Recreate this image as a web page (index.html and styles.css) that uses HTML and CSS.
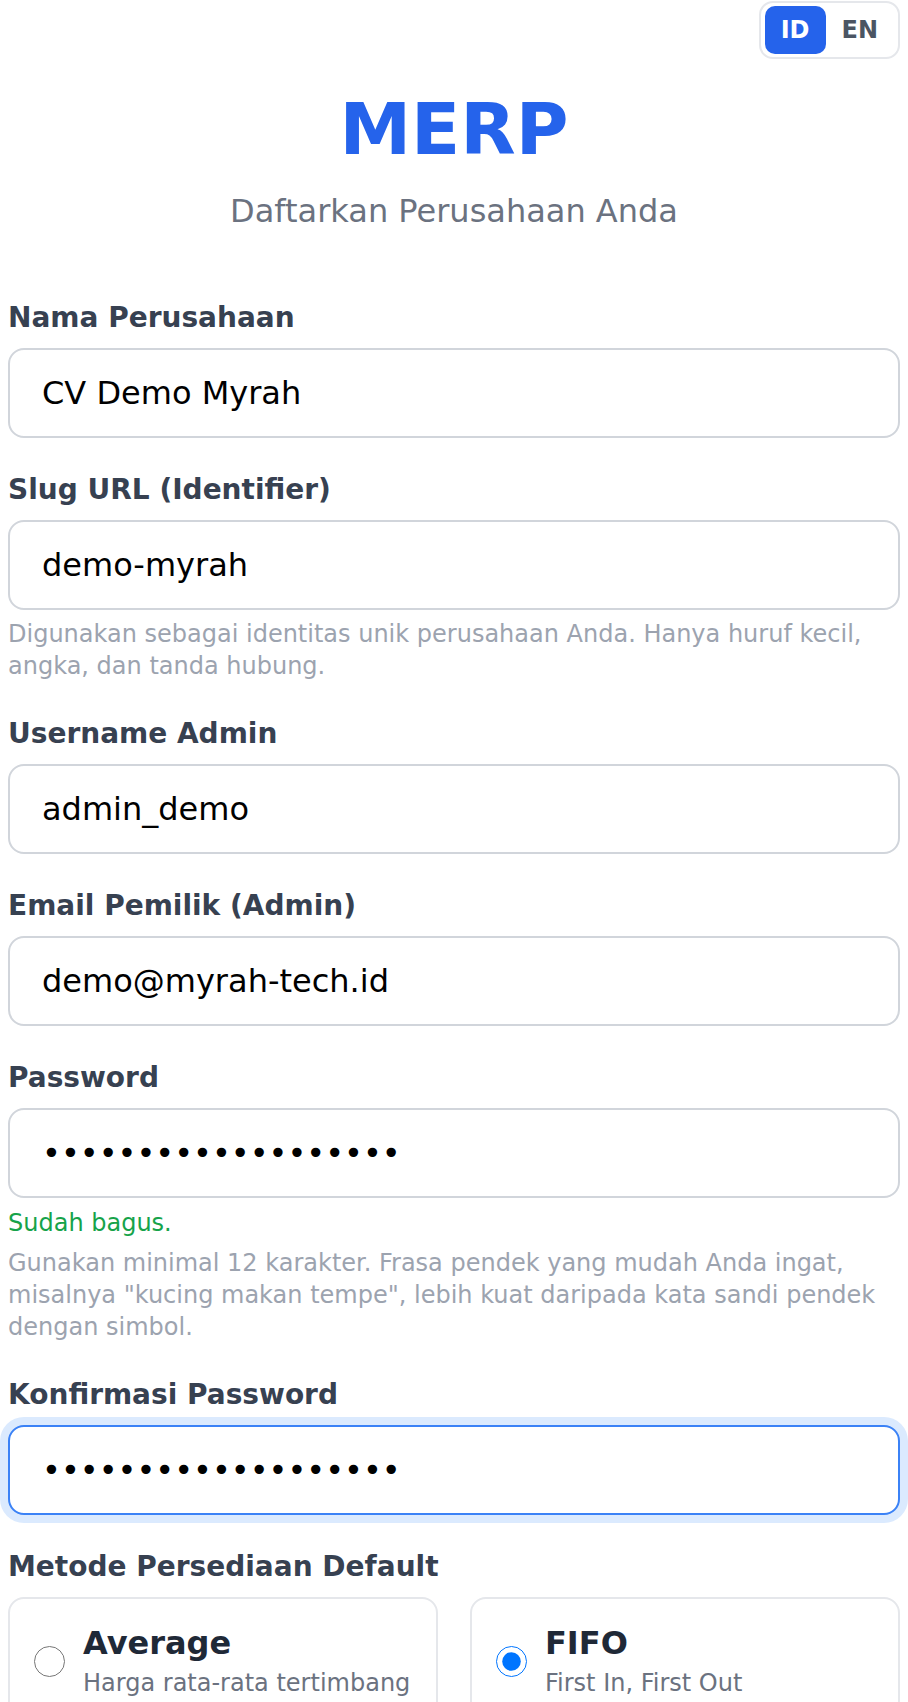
FILE: index.html
```html
<!DOCTYPE html>
<html lang="id">
<head>
<meta charset="utf-8">
<title>MERP - Daftarkan Perusahaan Anda</title>
<link rel="stylesheet" href="styles.css">
</head>
<body>
<div class="page">
  <div class="lang-row">
    <div class="lang-toggle">
      <button type="button" class="lang-btn is-active">ID</button>
      <button type="button" class="lang-btn">EN</button>
    </div>
  </div>

  <header class="brand">
    <h1 class="brand-title">MERP</h1>
    <p class="brand-sub">Daftarkan Perusahaan Anda</p>
  </header>

  <form class="form">
    <div class="field">
      <label class="field-label" for="company">Nama Perusahaan</label>
      <input class="field-input" id="company" type="text" value="CV Demo Myrah">
    </div>

    <div class="field">
      <label class="field-label" for="slug">Slug URL (Identifier)</label>
      <input class="field-input" id="slug" type="text" value="demo-myrah">
      <p class="field-help">Digunakan sebagai identitas unik perusahaan Anda. Hanya huruf kecil, angka, dan tanda hubung.</p>
    </div>

    <div class="field">
      <label class="field-label" for="username">Username Admin</label>
      <input class="field-input" id="username" type="text" value="admin_demo">
    </div>

    <div class="field">
      <label class="field-label" for="email">Email Pemilik (Admin)</label>
      <input class="field-input" id="email" type="email" value="demo@myrah-tech.id">
    </div>

    <div class="field">
      <label class="field-label" for="password">Password</label>
      <input class="field-input" id="password" type="password" value="kucingmakantempe123">
      <p class="field-ok">Sudah bagus.</p>
      <p class="field-help">Gunakan minimal 12 karakter. Frasa pendek yang mudah Anda ingat, misalnya "kucing makan tempe", lebih kuat daripada kata sandi pendek dengan simbol.</p>
    </div>

    <div class="field">
      <label class="field-label" for="password2">Konfirmasi Password</label>
      <input class="field-input is-focused" id="password2" type="password" value="kucingmakantempe123">
    </div>

    <div class="field">
      <span class="field-label">Metode Persediaan Default</span>
      <div class="method-grid">
        <label class="method-card">
          <input class="method-radio" type="radio" name="method" value="average">
          <span class="method-text">
            <span class="method-title">Average</span>
            <span class="method-desc">Harga rata-rata tertimbang</span>
          </span>
        </label>
        <label class="method-card">
          <input class="method-radio" type="radio" name="method" value="fifo" checked>
          <span class="method-text">
            <span class="method-title">FIFO</span>
            <span class="method-desc">First In, First Out</span>
          </span>
        </label>
      </div>
    </div>
  </form>
</div>
</body>
</html>
```
FILE: styles.css
```css
* {
  box-sizing: border-box;
}

html, body {
  margin: 0;
  padding: 0;
  background: #ffffff;
}

body {
  font-family: "DejaVu Sans", "Liberation Sans", sans-serif;
  color: #111827;
}

.page {
  padding: 0 8px;
}

.lang-row {
  display: flex;
  justify-content: flex-end;
  padding-top: 1px;
}

.lang-toggle {
  display: flex;
  border: 2px solid #e5e7eb;
  border-radius: 14px;
  padding: 3px 4px;
  background: #ffffff;
}

.lang-btn {
  font-family: inherit;
  font-size: 24px;
  font-weight: bold;
  line-height: 32px;
  padding: 8px 16px;
  border: 0;
  border-radius: 10px;
  background: transparent;
  color: #4b5563;
  margin: 0;
}

.lang-btn.is-active {
  background: #2563eb;
  color: #ffffff;
}

.brand {
  text-align: center;
}

.brand-title {
  margin: 30px 0 0;
  font-size: 72px;
  line-height: 80px;
  font-weight: bold;
  color: #2563eb;
}

.brand-sub {
  margin: 18px 0 0;
  font-size: 32px;
  line-height: 48px;
  color: #6b7280;
}

.form {
  margin-top: 63px;
  display: flex;
  flex-direction: column;
  gap: 32px;
}

.field {
  display: flex;
  flex-direction: column;
}

.field-label {
  display: block;
  font-size: 28px;
  line-height: 40px;
  font-weight: bold;
  color: #374151;
  margin-bottom: 10px;
}

.field-input {
  display: block;
  width: 100%;
  height: 90px;
  margin: 0;
  padding: 0 32px;
  font-family: inherit;
  font-size: 32px;
  color: #000000;
  background: #ffffff;
  border: 2px solid #d1d5db;
  border-radius: 16px;
  outline: none;
}

.field-input.is-focused {
  border-color: #3b82f6;
  box-shadow: 0 0 0 8px #dbeafe;
}

.field-help {
  margin: 8px 0 0;
  font-size: 24px;
  line-height: 32px;
  color: #9ca3af;
}

.field-ok {
  margin: 9px 0 0;
  font-size: 24px;
  line-height: 32px;
  color: #16a34a;
}

.method-grid {
  display: grid;
  grid-template-columns: 1fr 1fr;
  gap: 32px;
}

.method-card {
  display: flex;
  align-items: center;
  gap: 18px;
  padding: 20px 24px;
  border: 2px solid #e5e7eb;
  border-radius: 16px;
  background: #ffffff;
}

.method-radio {
  flex: none;
  width: 31px;
  height: 31px;
  margin: 5px 0 0;
}

.method-text {
  display: flex;
  flex-direction: column;
}

.method-title {
  font-size: 32px;
  line-height: 48px;
  font-weight: bold;
  color: #1f2937;
}

.method-desc {
  font-size: 24px;
  line-height: 32px;
  color: #6b7280;
}
```
